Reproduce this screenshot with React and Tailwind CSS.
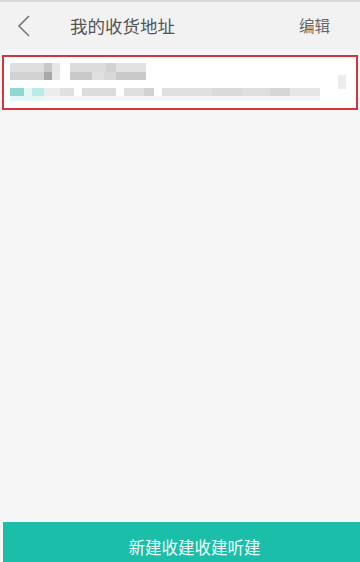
export default function App() {
  const font = { fontFamily: '"Noto Sans CJK SC", "Noto Sans", sans-serif' };
  return (
    <div className="w-[360px] h-[562px] bg-[#f6f6f6] flex flex-col overflow-hidden" style={font}>
      <div className="h-[2px] bg-[#d9d9d9]" />
      <div className="h-[48px] bg-[#f2f2f2] flex items-center">
        <svg width="14" height="24" viewBox="0 0 14 24" className="ml-[17px]">
          <path d="M12 2 L2 12 L12 22" fill="none" stroke="#777" strokeWidth="1.6" />
        </svg>
        <div className="ml-[39px] text-[17.5px] text-[#555] leading-none">我的收货地址</div>
        <div className="ml-auto mr-[30px] text-[15.5px] text-[#666] leading-none">编辑</div>
      </div>
      <div className="mt-[5px] mx-[2px] h-[55px] bg-white border-2 border-[#d8323c] relative flex flex-col pl-[6px] pt-[6px]">
        <div className="flex flex-col">
          <div className="flex h-[9px]">
            <div className="w-[34px] bg-[#dedede]" />
            <div className="w-[8px] bg-[#c9c9c9]" />
            <div className="w-[8px] bg-[#e6e6e6]" />
            <div className="w-[10px]" />
            <div className="w-[36px] bg-[#dcdcdc]" />
            <div className="w-[10px] bg-[#d2d2d2]" />
            <div className="w-[30px] bg-[#e2e2e2]" />
          </div>
          <div className="flex h-[8px]">
            <div className="w-[34px] bg-[#d2d2d2]" />
            <div className="w-[8px] bg-[#a9a9a9]" />
            <div className="w-[8px] bg-[#e8e8e8]" />
            <div className="w-[10px]" />
            <div className="w-[22px] bg-[#c9c9c9]" />
            <div className="w-[12px] bg-[#e0e0e0]" />
            <div className="w-[12px] bg-[#d8d8d8]" />
            <div className="w-[30px] bg-[#c9c9c9]" />
          </div>
        </div>
        <div className="flex h-[8px] mt-[8px]">
          <div className="w-[14px] bg-[#8ed8d4]" />
          <div className="w-[8px] bg-[#e6f6f5]" />
          <div className="w-[12px] bg-[#b9ebe7]" />
          <div className="w-[16px] bg-[#ececec]" />
          <div className="w-[14px] bg-[#e0e0e0]" />
          <div className="w-[8px]" />
          <div className="w-[34px] bg-[#dcdcdc]" />
          <div className="w-[8px]" />
          <div className="w-[20px] bg-[#dedede]" />
          <div className="w-[10px] bg-[#d2d2d2]" />
          <div className="w-[8px]" />
          <div className="w-[50px] bg-[#e0e0e0]" />
          <div className="w-[30px] bg-[#dadada]" />
          <div className="w-[28px] bg-[#dedede]" />
          <div className="w-[20px] bg-[#d6d6d6]" />
          <div className="w-[30px] bg-[#e6e6e6]" />
        </div>
        <div className="flex h-[5px]">
          <div className="w-[34px] bg-[#e4f6f5]" />
          <div className="w-[276px] bg-[#f4f4f4]" />
        </div>
        <div className="absolute right-[10px] top-[18px] w-[8px] h-[14px] bg-[#ececec]" />
      </div>
      <div className="flex-1" />
      <div className="h-[40px] ml-[3px] bg-[#1bbfa9] flex items-center justify-center pl-[26px] pt-[10px]">
        <span className="text-[16.5px] text-[#f0fbf9] leading-none">新建收建收建听建</span>
      </div>
    </div>
  );
}
